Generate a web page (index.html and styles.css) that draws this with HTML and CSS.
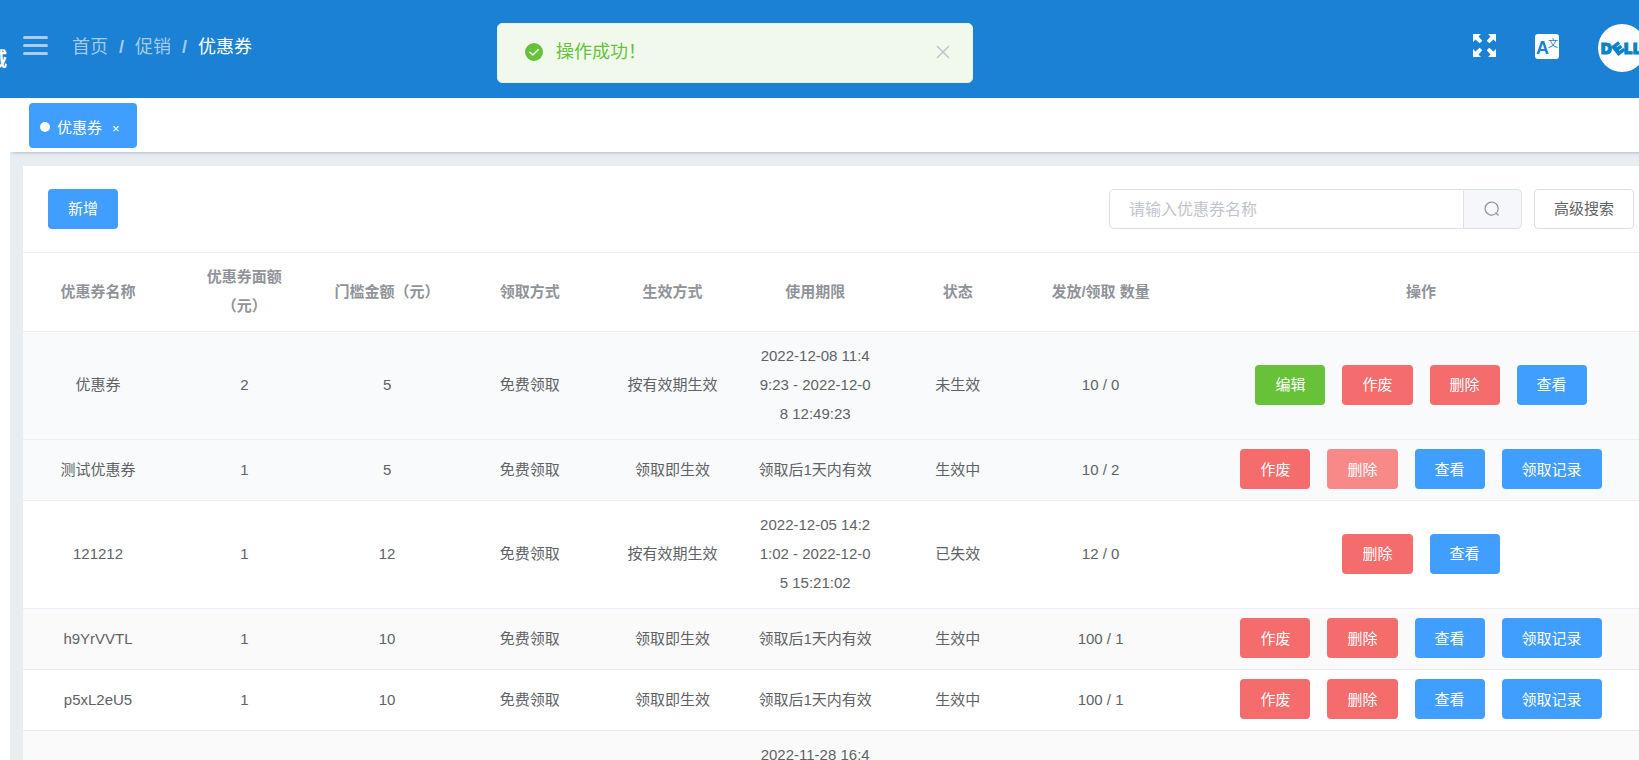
FILE: index.html
```
<!DOCTYPE html>
<html lang="zh-CN">
<head>
  <meta charset="UTF-8">
  <title>优惠券</title>
  <link rel="stylesheet" href="styles.css">
</head>
<body>
  <div class="app">
    <header class="header">
      <div class="brand"><span>城</span></div>
      <button class="icon-btn menu-btn" aria-label="菜单">
        <svg width="25" height="19" viewBox="0 0 25 19"><path d="M1.5 1.5h22M1.5 9.5h22M1.5 17.5h22" stroke="#a9cdee" stroke-width="3" stroke-linecap="round"/></svg>
      </button>
      <nav class="breadcrumb">
        <a href="#">首页</a>
        <span class="sep">/</span>
        <a href="#">促销</a>
        <span class="sep">/</span>
        <span class="current">优惠券</span>
      </nav>
      <div class="header-right">
        <button class="icon-btn" aria-label="全屏">
          <svg width="23" height="23" viewBox="0 0 23 23" fill="#fff">
            <path id="arrow" d="M0 0h8L5.500 2.500l3.800 4.200-2.600 2.600-4.200-3.800L0 8z"/>
            <use href="#arrow" transform="translate(23 0) scale(-1 1)"/>
            <use href="#arrow" transform="translate(0 23) scale(1 -1)"/>
            <use href="#arrow" transform="translate(23 23) scale(-1 -1)"/>
          </svg>
        </button>
        <button class="icon-btn lang-btn" aria-label="语言">
          <svg width="24" height="25" viewBox="0 0 24 25">
            <rect width="24" height="25" rx="3" fill="#fff"/>
            <text class="lang-a" x="1" y="20">A</text>
            <text class="lang-w" x="13" y="13">文</text>
          </svg>
        </button>
        <button class="icon-btn avatar" aria-label="用户">
          <svg width="48" height="48" viewBox="0 0 48 48">
            <circle cx="24" cy="24" r="24" fill="#fff"/>
            <g class="logo">
              <text x="3" y="30">D</text>
              <text x="15" y="30" transform="rotate(-38 20 24)">E</text>
              <text x="26" y="30">L</text>
              <text x="35" y="30">L</text>
            </g>
          </svg>
        </button>
      </div>
    </header>

    <div class="message" role="alert">
      <svg width="18" height="18" viewBox="0 0 18 18"><circle cx="9" cy="9" r="9" fill="#67c23a"/><path d="M5 9.2l2.9 2.8L13.200 6.600" fill="none" stroke="#f0f9eb" stroke-width="1.500" stroke-linecap="round" stroke-linejoin="round"/></svg>
      <p>操作成功！</p>
      <button class="icon-btn" aria-label="关闭">
        <svg width="14" height="14" viewBox="0 0 14 14"><path d="M1 1l12 12M13 1L1 13" stroke="#c0c4cc" stroke-width="1.500"/></svg>
      </button>
    </div>

    <div class="main">
      <div class="tabs">
        <a class="tab" href="#"><i class="dot"></i>优惠券<span class="tab-close">×</span></a>
      </div>

      <div class="card">
        <div class="toolbar">
          <button class="btn primary">新增</button>
          <form class="search">
            <input type="text" placeholder="请输入优惠券名称" aria-label="优惠券名称">
            <button class="search-btn" type="button" aria-label="搜索">
              <svg width="16" height="16" viewBox="0 0 16 16"><path d="M11.500 12.800a6.500 6.500 0 1 1 1.300-1.300M11.500 11.500l3 3" fill="none" stroke="#909399" stroke-width="1.200"/></svg>
            </button>
            <button class="btn plain" type="button">高级搜索</button>
          </form>
        </div>

        <table>
          <colgroup>
            <col class="col-name"><col><col><col><col><col><col><col><col class="col-action">
          </colgroup>
          <thead>
            <tr>
              <th>优惠券名称</th>
              <th>优惠券面额<br>（元）</th>
              <th>门槛金额（元）</th>
              <th>领取方式</th>
              <th>生效方式</th>
              <th>使用期限</th>
              <th>状态</th>
              <th>发放/领取 数量</th>
              <th>操作</th>
            </tr>
          </thead>
          <tbody>
            <tr class="active">
              <td>优惠券</td><td>2</td><td>5</td><td>免费领取</td><td>按有效期生效</td>
              <td>2022-12-08 11:49:23 - 2022-12-08 12:49:23</td><td>未生效</td><td>10 / 0</td>
              <td>
                <div class="actions">
                  <button class="btn success">编辑</button>
                  <button class="btn danger">作废</button>
                  <button class="btn danger">删除</button>
                  <button class="btn primary">查看</button>
                </div>
              </td>
            </tr>
            <tr class="active">
              <td>测试优惠券</td><td>1</td><td>5</td><td>免费领取</td><td>领取即生效</td>
              <td>领取后1天内有效</td><td>生效中</td><td>10 / 2</td>
              <td>
                <div class="actions">
                  <button class="btn danger">作废</button>
                  <button class="btn danger hover">删除</button>
                  <button class="btn primary">查看</button>
                  <button class="btn primary">领取记录</button>
                </div>
              </td>
            </tr>
            <tr>
              <td>121212</td><td>1</td><td>12</td><td>免费领取</td><td>按有效期生效</td>
              <td>2022-12-05 14:21:02 - 2022-12-05 15:21:02</td><td>已失效</td><td>12 / 0</td>
              <td>
                <div class="actions">
                  <button class="btn danger">删除</button>
                  <button class="btn primary">查看</button>
                </div>
              </td>
            </tr>
            <tr>
              <td>h9YrVVTL</td><td>1</td><td>10</td><td>免费领取</td><td>领取即生效</td>
              <td>领取后1天内有效</td><td>生效中</td><td>100 / 1</td>
              <td>
                <div class="actions">
                  <button class="btn danger">作废</button>
                  <button class="btn danger">删除</button>
                  <button class="btn primary">查看</button>
                  <button class="btn primary">领取记录</button>
                </div>
              </td>
            </tr>
            <tr>
              <td>p5xL2eU5</td><td>1</td><td>10</td><td>免费领取</td><td>领取即生效</td>
              <td>领取后1天内有效</td><td>生效中</td><td>100 / 1</td>
              <td>
                <div class="actions">
                  <button class="btn danger">作废</button>
                  <button class="btn danger">删除</button>
                  <button class="btn primary">查看</button>
                  <button class="btn primary">领取记录</button>
                </div>
              </td>
            </tr>
            <tr>
              <td></td><td></td><td></td><td></td><td></td>
              <td>2022-11-28 16:40:00 - 2022-11-29 16:40:00</td><td></td><td></td><td></td>
            </tr>
          </tbody>
        </table>
      </div>
    </div>
  </div>
</body>
</html>
```
FILE: styles.css
```
* {
  box-sizing: border-box;
}
body {
  margin: 0;
  font-family: "Liberation Sans", "Noto Sans CJK SC", sans-serif;
  font-size: 15px;
  color: #606266;
  background-color: #fff;
}
button, input {
  font-family: inherit;
}
a {
  text-decoration: none;
}
svg {
  display: block;
}
.app {
  height: 100vh;
  overflow: hidden;
}
.icon-btn {
  padding: 0;
  border: none;
  background: none;
  cursor: pointer;
}

/* Header, runs past the right edge like the content below */
.header {
  display: flex;
  align-items: center;
  height: 98px;
  margin-right: -44px;
  padding: 0 37px 8px 0;
  background-color: #1a81d4;
}
.brand {
  display: flex;
  justify-content: flex-end;
  width: 7px;
  margin-right: 16px;
  padding-top: 26px;
  overflow: hidden;
  font-size: 20px;
  font-weight: bold;
  color: #fff;
}
.breadcrumb {
  display: flex;
  gap: 11px;
  margin-left: 24px;
  padding-top: 4px;
  font-size: 18px;
  line-height: 26px;
}
.breadcrumb a {
  color: #a3caed;
}
.sep {
  font-weight: bold;
  color: #a3caed;
}
.current {
  color: #fff;
}
.header-right {
  display: flex;
  align-items: center;
  gap: 39px;
  margin-left: auto;
}
.lang-btn {
  padding-top: 3px;
}
.lang-a {
  font-size: 18px;
  font-weight: bold;
  fill: #1a81d4;
}
.lang-w {
  font-size: 10px;
  fill: #1a81d4;
}
.avatar {
  padding-top: 6px;
}
.logo {
  font-family: Inter, sans-serif;
  font-size: 15px;
  font-weight: 900;
  fill: #0682c8;
  stroke: #0682c8;
  stroke-width: 1px;
}

/* Success message */
.message {
  position: absolute;
  top: 23px;
  left: 497px;
  display: flex;
  align-items: center;
  width: 476px;
  height: 60px;
  padding: 0 22px 2px 27px;
  border: 1px solid #e1f3d8;
  border-radius: 5px;
  background-color: #f0f9eb;
}
.message p {
  flex: 1;
  margin: 0 0 0 13px;
  font-size: 18px;
  line-height: 26px;
  color: #67c23a;
}

/* Main */
.main {
  margin-left: 10px;
  margin-right: -44px;
  background-color: #e8edf1;
}
.tabs {
  height: 54px;
  padding: 5px 19px;
  background-color: #fff;
  box-shadow: 0 3px 3px -2px #b4bcc6;
}
.tab {
  display: inline-flex;
  align-items: center;
  height: 45px;
  padding: 2px 17px 0 11px;
  border-radius: 4px;
  color: #fff;
  background-color: #409eff;
}
.dot {
  width: 10px;
  height: 10px;
  margin-right: 7px;
  border-radius: 50%;
  background-color: #fff;
}
.tab-close {
  margin-left: 10px;
  padding-top: 3px;
  font-size: 13px;
}
.card {
  margin: 14px 13px 0;
  background-color: #fff;
}
.toolbar {
  display: flex;
  justify-content: space-between;
  padding: 23px 36px 23px 25px;
  border-bottom: 1px solid #ebeef5;
}
.toolbar .btn {
  padding-bottom: 3px;
}
.search {
  display: flex;
}
.search input {
  width: 355px;
  height: 40px;
  padding: 2px 19px 0;
  border: 1px solid #dcdfe6;
  border-radius: 5px 0 0 5px;
  font-size: 16px;
  outline: none;
}
.search input::placeholder {
  color: #c0c4cc;
}
.search-btn {
  width: 58px;
  margin-right: 12px;
  padding: 0 20px;
  border: 1px solid #dcdfe6;
  border-left: none;
  border-radius: 0 5px 5px 0;
  background-color: #f5f7fa;
}

/* Buttons */
.btn {
  height: 40px;
  padding: 0 20px;
  border: none;
  border-radius: 4px;
  font-size: 15px;
  color: #fff;
  cursor: pointer;
}
.primary {
  background-color: #409eff;
}
.success {
  background-color: #67c23a;
}
.danger {
  background-color: #f56c6c;
}
.danger:hover, .danger.hover {
  background-color: #f78989;
}
.plain {
  padding: 0 19px;
  border: 1px solid #dcdfe6;
  color: #606266;
  background-color: #fff;
}

/* Table */
table {
  width: 100%;
  table-layout: fixed;
  border-spacing: 0;
}
.col-name {
  width: 150px;
}
.col-action {
  width: 498px;
}
th, td {
  height: 61px;
  padding: 9px 13px 11px;
  border-bottom: 1px solid #ebeef5;
  text-align: center;
  line-height: 29px;
  word-break: break-all;
}
th {
  color: #909399;
}
tbody tr:nth-child(even) {
  background-color: #fafafa;
}
tbody tr.active {
  background-color: #f8fafc;
}
.actions {
  display: flex;
  justify-content: center;
  gap: 17px;
}
.actions .btn {
  padding-bottom: 2px;
}
```
